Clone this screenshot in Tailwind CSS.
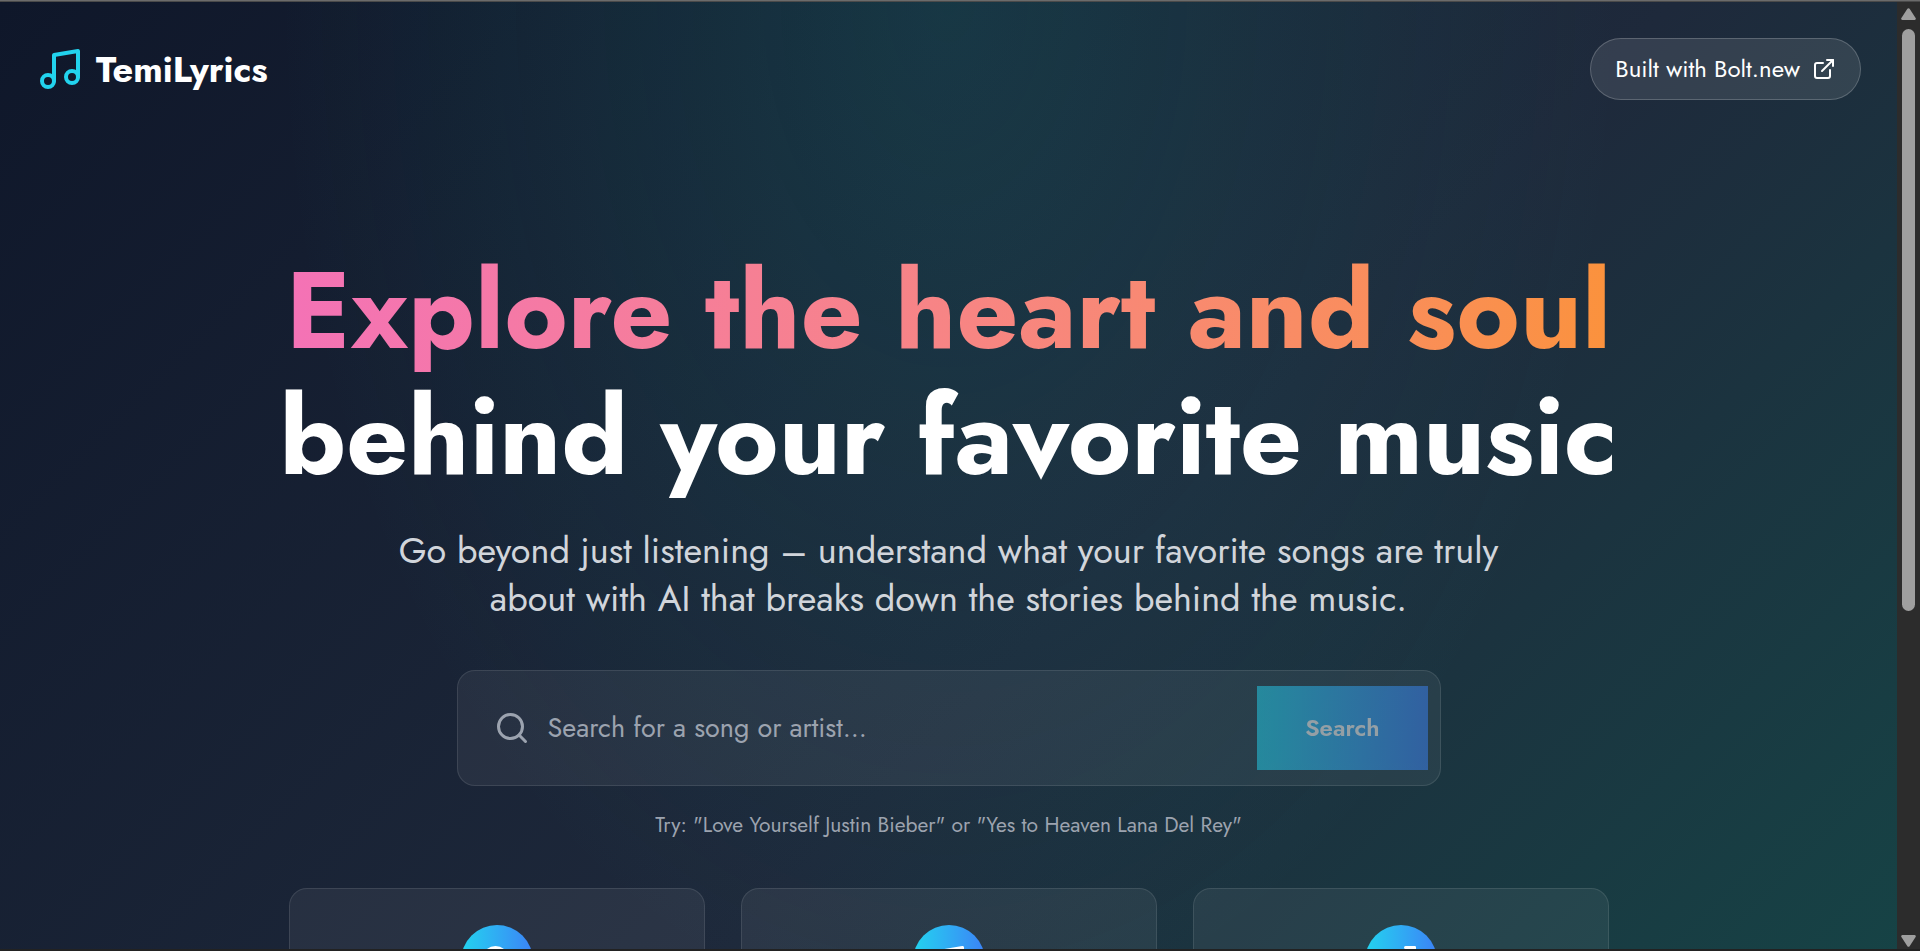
<!DOCTYPE html>
<html lang="en">
<head>
    <meta charset="UTF-8">
    <meta name="viewport" content="width=device-width, initial-scale=1.0">
    <title>TemiLyrics</title>
    <script src="https://cdn.jsdelivr.net/npm/@tailwindcss/browser@4"></script>
</head>
<body class="h-screen flex flex-col overflow-hidden bg-[#2c2c2c] font-['Jost','Lato',sans-serif] text-white">

    <div class="h-0.5 shrink-0 bg-[#4a4a4a] border-t border-[#6b6b6b]"></div>

    <div class="flex-1 min-h-0 flex">
        <div class="flex-1 min-w-0 overflow-hidden">
            <div class="min-h-[153vh] bg-[radial-gradient(ellipse_at_top,rgba(20,184,166,0.15),transparent_50%),linear-gradient(135deg,#0f172a,#1e293b_50%,#134e4a)]">

                <!-- Navbar -->
                <nav class="flex items-center justify-between p-9">
                    <a href="#" class="flex items-center gap-3">
                        <svg class="size-12 text-[#22d3ee]" viewBox="0 0 24 24" fill="none" stroke="currentColor" stroke-width="2" stroke-linecap="round" stroke-linejoin="round">
                            <path d="M9 18V5l12-2v13"/>
                            <circle cx="6" cy="18" r="3"/>
                            <circle cx="18" cy="16" r="3"/>
                        </svg>
                        <span class="text-[36px] leading-12 font-bold">TemiLyrics</span>
                    </a>
                    <a href="#" class="flex items-center gap-3 rounded-full border border-white/20 bg-white/10 px-6 py-3 text-[24px] leading-9">
                        <span>Built with Bolt.new</span>
                        <svg class="size-6" viewBox="0 0 24 24" fill="none" stroke="currentColor" stroke-width="2" stroke-linecap="round" stroke-linejoin="round">
                            <path d="M15 3h6v6"/>
                            <path d="M10 14 21 3"/>
                            <path d="M18 13v6a2 2 0 0 1-2 2H5a2 2 0 0 1-2-2V8a2 2 0 0 1 2-2h6"/>
                        </svg>
                    </a>
                </nav>

                <!-- Hero -->
                <main class="mx-auto max-w-[1392px] px-9 pt-28 text-center">
                    <h1 class="text-[108px] leading-[126px] font-bold whitespace-nowrap flex flex-col items-center">
                        <span class="bg-linear-to-r from-[#f472b6] to-[#fb923c] bg-clip-text text-transparent">Explore the heart and soul</span>
                        <span>behind your favorite music</span>
                    </h1>
                    <p class="mx-auto mt-[26px] max-w-[1152px] text-[36px] leading-12 text-[#d1d5db]">
                        Go beyond just listening – understand what your favorite songs are truly<br>
                        about with AI that breaks down the stories behind the music.
                    </p>

                    <!-- Search -->
                    <form class="mx-auto mt-12 flex max-w-[984px] items-center rounded-[18px] border border-white/10 bg-white/[0.06] py-[15px] pl-9 pr-3">
                        <label for="song" class="shrink-0">
                            <svg class="size-9 text-[#9ca3af]" viewBox="0 0 24 24" fill="none" stroke="currentColor" stroke-width="2" stroke-linecap="round" stroke-linejoin="round" role="img" aria-label="Song or artist">
                                <circle cx="11" cy="11" r="8"/>
                                <path d="m21 21-4.3-4.3"/>
                            </svg>
                        </label>
                        <input id="song" type="text" placeholder="Search for a song or artist..." class="ml-[18px] min-w-0 flex-1 bg-transparent text-[27px] leading-10 outline-none placeholder:text-[#9ca3af]">
                        <button type="submit" disabled class="bg-linear-to-r from-[#22d3ee] to-[#3b82f6] px-12 py-6 text-[24px] leading-9 font-semibold opacity-50">Search</button>
                    </form>
                    <p class="mt-6 text-[21px] leading-[30px] text-[#9ca3af]">Try: "Love Yourself Justin Bieber" or "Yes to Heaven Lana Del Rey"</p>

                    <!-- Features -->
                    <div class="mt-12 grid grid-cols-3 gap-9">
                        <div class="h-[420px] rounded-[18px] border border-white/10 bg-white/[0.06] p-9">
                            <div class="mx-auto flex size-[72px] items-center justify-center rounded-full bg-linear-to-r from-[#22d3ee] to-[#3b82f6]">
                                <svg class="size-9" viewBox="0 0 24 24" fill="none" stroke="currentColor" stroke-width="2" stroke-linecap="round" stroke-linejoin="round">
                                    <circle cx="11" cy="11" r="8"/>
                                    <path d="m21 21-4.3-4.3"/>
                                </svg>
                            </div>
                        </div>
                        <div class="rounded-[18px] border border-white/10 bg-white/[0.06] p-9">
                            <div class="mx-auto flex size-[72px] items-center justify-center rounded-full bg-linear-to-r from-[#22d3ee] to-[#3b82f6]">
                                <svg class="size-9" viewBox="0 0 24 24" fill="none" stroke="currentColor" stroke-width="2" stroke-linecap="round" stroke-linejoin="round">
                                    <path d="M9 18V5l12-2v13"/>
                                    <circle cx="6" cy="18" r="3"/>
                                    <circle cx="18" cy="16" r="3"/>
                                </svg>
                            </div>
                        </div>
                        <div class="rounded-[18px] border border-white/10 bg-white/[0.06] p-9">
                            <div class="mx-auto flex size-[72px] items-center justify-center rounded-full bg-linear-to-r from-[#22d3ee] to-[#3b82f6]">
                                <svg class="size-9" viewBox="0 0 24 24" fill="none" stroke="currentColor" stroke-width="2" stroke-linecap="round" stroke-linejoin="round">
                                    <path d="M15 3h6v6"/>
                                    <path d="M10 14 21 3"/>
                                    <path d="M18 13v6a2 2 0 0 1-2 2H5a2 2 0 0 1-2-2V8a2 2 0 0 1 2-2h6"/>
                                </svg>
                            </div>
                        </div>
                    </div>
                </main>
            </div>
        </div>

        <!-- Scrollbar -->
        <div class="w-[23px] shrink-0 flex flex-col items-center pt-1.5 pb-0.5">
            <svg class="w-[15px] h-3" viewBox="0 0 15 12" fill="#9f9f9f"><path d="M6.4.8a1.3 1.3 0 0 1 2.2 0l6 9.2a1.2 1.2 0 0 1-1 1.9H1.4a1.2 1.2 0 0 1-1-1.9z"/></svg>
            <div class="mt-[9px] flex-1 w-[13px]">
                <div class="h-[64.2%] rounded-full bg-[#9f9f9f]"></div>
            </div>
            <svg class="w-[15px] h-3" viewBox="0 0 15 12" fill="#9f9f9f"><path d="M6.4 11.2a1.3 1.3 0 0 0 2.2 0l6-9.2a1.2 1.2 0 0 0-1-1.9H1.4A1.2 1.2 0 0 0 .4 2z"/></svg>
        </div>
    </div>

    <div class="h-0.5 shrink-0 bg-[#222222]"></div>
</body>
</html>
